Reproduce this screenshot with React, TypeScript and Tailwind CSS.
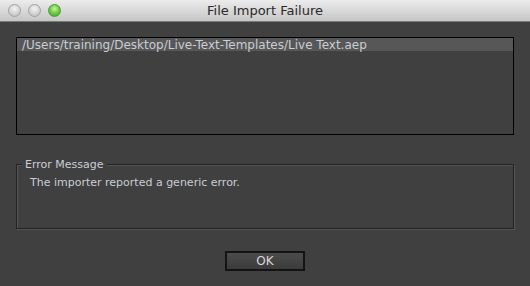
import React from "react";

const font = { fontFamily: '"DejaVu Sans", "Liberation Sans", sans-serif' };

function Light({ green }: { green?: boolean }) {
  return (
    <span
      className={
        green
          ? "block h-[13px] w-[13px] rounded-full border border-[#4f9a35] bg-[radial-gradient(circle_at_50%_35%,#c8f5a8_0%,#72d14a_45%,#3f9c22_100%)]"
          : "block h-[13px] w-[13px] rounded-full border border-[#a2a2a2] bg-[radial-gradient(circle_at_50%_35%,#f4f4f4_0%,#d6d6d6_50%,#b9b9b9_100%)]"
      }
    />
  );
}

export default function App() {
  return (
    <div
      className="flex h-[286px] w-[530px] flex-col bg-[#404040] text-[11px] text-[#c9cdd6]"
      style={font}
    >
      <div className="grid h-[22px] grid-cols-[1fr_auto_1fr] items-center border-b border-[#7a7a7a] bg-gradient-to-b from-[#ececec] to-[#c6c6c6]">
        <div className="flex items-center gap-[7px] pl-[8px]">
          <Light />
          <Light />
          <Light green />
        </div>
        <div className="text-[13px] text-[#2a2a2a]">File Import Failure</div>
        <div />
      </div>

      <div className="flex flex-1 flex-col px-[16px]">
        <div className="mt-[15px] h-[98px] border border-black">
          <div className="flex h-[13px] items-center bg-[#575757] pl-[5px] text-[12px] leading-none">
            /Users/training/Desktop/Live-Text-Templates/Live Text.aep
          </div>
        </div>

        <div className="relative mt-[29px] h-[65px] border border-[#232323] shadow-[1px_1px_0_#555,inset_1px_1px_0_#555]">
          <span className="absolute -top-[7px] left-[5px] bg-[#404040] px-[3px] leading-[14px]">
            Error Message
          </span>
          <div className="pl-[13px] pt-[11px] leading-[14px]">
            The importer reported a generic error.
          </div>
        </div>

        <div className="mt-[22px] flex justify-center">
          <button className="flex h-[20px] w-[80px] items-center justify-center border-2 border-[#141414] bg-gradient-to-b from-[#4c4c4c] to-[#3b3b3b] text-[12px] text-[#d8d8d8]">
            OK
          </button>
        </div>
      </div>
    </div>
  );
}
